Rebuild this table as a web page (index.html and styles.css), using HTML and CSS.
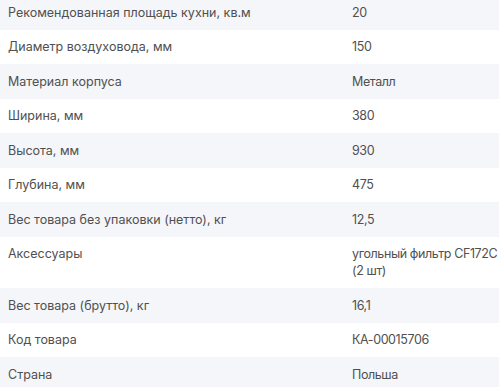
FILE: index.html
```html
<!DOCTYPE html>
<html lang="ru">
<head>
<meta charset="utf-8">
<link rel="stylesheet" href="styles.css">
</head>
<body>
<div class="specs">
  <div class="row"><div class="label">Рекомендованная площадь кухни, кв.м</div><div class="value">20</div></div>
  <div class="row"><div class="label">Диаметр воздуховода, мм</div><div class="value">150</div></div>
  <div class="row"><div class="label">Материал корпуса</div><div class="value">Металл</div></div>
  <div class="row"><div class="label">Ширина, мм</div><div class="value">380</div></div>
  <div class="row"><div class="label">Высота, мм</div><div class="value">930</div></div>
  <div class="row"><div class="label">Глубина, мм</div><div class="value">475</div></div>
  <div class="row"><div class="label">Вес товара без упаковки (нетто), кг</div><div class="value">12,5</div></div>
  <div class="row"><div class="label">Аксессуары</div><div class="value">угольный фильтр CF172C (2 шт)</div></div>
  <div class="row"><div class="label">Вес товара (брутто), кг</div><div class="value">16,1</div></div>
  <div class="row"><div class="label">Код товара</div><div class="value">КА-00015706</div></div>
  <div class="row"><div class="label">Страна</div><div class="value">Польша</div></div>
</div>
</body>
</html>
```
FILE: styles.css
```css
html, body {
  margin: 0;
  padding: 0;
  background: #ffffff;
}
body {
  font-family: Inter, "Noto Sans", sans-serif;
  font-size: 12.5px;
  color: #505050;
  overflow: hidden;
}
.specs {
  margin-top: -5px;
  display: flex;
  flex-direction: column;
}
.row {
  display: grid;
  grid-template-columns: 352px 1fr;
  padding: 8.75px 0;
  line-height: 17px;
}
.row:nth-child(odd) {
  background: #f5f6fa;
}
.label {
  padding-left: 8px;
}
.value {
  letter-spacing: -0.4px;
}
```
